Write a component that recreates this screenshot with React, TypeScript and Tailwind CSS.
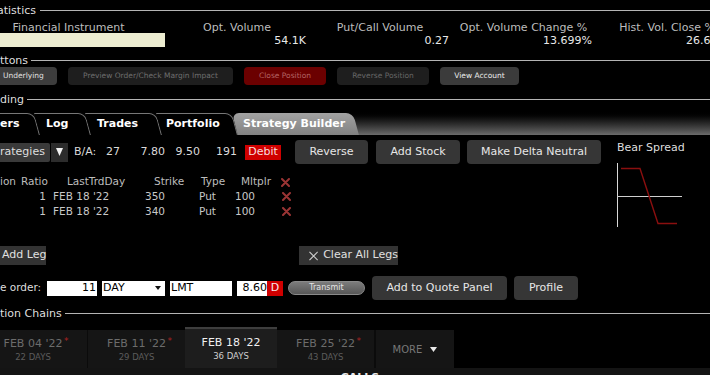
import React from "react";

function SectionTitle({ label, textClass, lineClass, className }: { label: string; textClass: string; lineClass: string; className: string }) {
  return (
    <div className={`flex items-center ${className}`}>
      <span className={`whitespace-nowrap text-[11px] leading-none text-[#dedede] ${textClass}`}>{label}</span>
      <div className={`h-px flex-1 bg-[#b4b4b4] ${lineClass}`} />
    </div>
  );
}

function RedX() {
  return (
    <svg width="9" height="9" viewBox="0 0 9 9" className="block">
      <path d="M1 1L8 8M8 1L1 8" stroke="#9a3434" strokeWidth="2" strokeLinecap="round" />
    </svg>
  );
}

function DateTab({ date, days, star, active, className }: { date: string; days: string; star?: boolean; active?: boolean; className: string }) {
  return (
    <div
      className={`flex shrink-0 flex-col items-center justify-center ${
        active ? "self-stretch border-t-2 border-[#3e3e3e] bg-[#1d1d1d]" : "mt-[3px] bg-[#151515]"
      } ${className}`}
    >
      <div className={`relative text-[11px] leading-[13px] ${active ? "text-[#f0f0f0]" : "text-[#6c6c6c]"}`}>
        {date}
        {star && <span className="absolute -right-[6px] -top-[2px] text-[9px] text-[#a22]">*</span>}
      </div>
      <div className={`mt-[2px] text-[8.5px] leading-[10px] ${active ? "text-[#cfcfcf]" : "text-[#5c5c5c]"}`}>{days}</div>
    </div>
  );
}

export default function App() {
  return (
    <div className="relative h-[375px] w-[710px] overflow-hidden bg-black font-['DejaVu_Sans',sans-serif] text-[#d8d8d8]">
      {/* Statistics */}
      <SectionTitle label="atistics" textClass="-ml-[3px]" lineClass="ml-[4px]" className="h-[21px]" />
      <div className="flex h-[12px] items-center whitespace-nowrap text-[11px] leading-none text-[#bdbdbd]">
        <div className="w-[165px] shrink-0 pr-[28px] text-center">Financial Instrument</div>
        <div className="w-[144px] shrink-0 text-center">Opt. Volume</div>
        <div className="w-[142px] shrink-0 text-center">Put/Call Volume</div>
        <div className="w-[145px] shrink-0 text-center">Opt. Volume Change %</div>
        <div className="w-[142px] shrink-0 text-center">Hist. Vol. Close %</div>
      </div>
      <div className="flex h-[14px] items-center whitespace-nowrap text-[11px] leading-none text-[#e8e8e8]">
        <div className="h-[14px] w-[165px] shrink-0 bg-[#ededd1]" />
        <div className="w-[144px] shrink-0 pr-[3px] text-right">54.1K</div>
        <div className="w-[142px] shrink-0 pr-[2px] text-right">0.27</div>
        <div className="w-[145px] shrink-0 pr-[4px] text-right">13.699%</div>
        <div className="w-[142px] shrink-0 pr-[10px] text-right">26.63%</div>
      </div>

      {/* Buttons */}
      <SectionTitle label="ttons" textClass="" lineClass="ml-[3px]" className="mt-[6px] h-[14px]" />
      <div className="flex h-[18px] whitespace-nowrap text-[7.5px]">
        <div className="flex w-[57px] shrink-0 items-center rounded-r-[4px] bg-[#3d3d3d] pl-[3px] text-[#e0e0e0]">Underlying</div>
        <div className="ml-[11px] flex w-[165px] shrink-0 items-center justify-center rounded-[4px] bg-[#1e1e1e] text-[#6e6e6e]">
          Preview Order/Check Margin Impact
        </div>
        <div className="ml-[11px] flex w-[82px] shrink-0 items-center justify-center rounded-[4px] bg-[#6b0000] text-[#b36464]">
          Close Position
        </div>
        <div className="ml-[11px] flex w-[92px] shrink-0 items-center justify-center rounded-[4px] bg-[#1e1e1e] text-[#666]">
          Reverse Position
        </div>
        <div className="ml-[11px] flex w-[79px] shrink-0 items-center justify-center rounded-[4px] bg-[#3b3b3b] text-[#ececec]">
          View Account
        </div>
      </div>

      {/* Trading */}
      <SectionTitle label="ding" textClass="" lineClass="ml-[3px]" className="mt-[7px] h-[14px]" />
      <div className="flex h-[29px] items-end overflow-hidden bg-linear-to-b from-black from-[15%] to-[#6c6c6c]">
        <div className="relative z-50 -ml-[8px] flex h-[22px] w-[42px] shrink-0 items-center">
          <div className="absolute inset-0 origin-top skew-x-[15deg] rounded-tr-[7px] border-r border-t border-[#777] bg-black" />
          <span className="relative pl-[8px] text-[11px] font-bold text-white">ers</span>
        </div>
        <div className="relative z-40 flex h-[22px] w-[51px] shrink-0 items-center">
          <div className="absolute inset-0 origin-top skew-x-[15deg] rounded-tr-[7px] border-r border-t border-[#777] bg-black" />
          <span className="relative pl-[12px] text-[11px] font-bold text-white">Log</span>
        </div>
        <div className="relative z-30 flex h-[22px] w-[71px] shrink-0 items-center">
          <div className="absolute inset-0 origin-top skew-x-[15deg] rounded-tr-[7px] border-r border-t border-[#777] bg-black" />
          <span className="relative pl-[12px] text-[11px] font-bold text-white">Trades</span>
        </div>
        <div className="relative z-20 flex h-[22px] w-[76px] shrink-0 items-center">
          <div className="absolute inset-0 origin-top skew-x-[15deg] rounded-tr-[7px] border-r border-t border-[#777] bg-black" />
          <span className="relative pl-[10px] text-[11px] font-bold text-white">Portfolio</span>
        </div>
        <div className="relative z-[60] flex h-[22px] w-[121px] shrink-0 items-center">
          <div className="absolute inset-0 origin-top skew-x-[15deg] rounded-t-[7px] bg-linear-to-b from-[#a2a2a2] to-[#828282]" />
          <span className="relative pl-[11px] text-[11px] font-bold text-white">Strategy Builder</span>
        </div>
      </div>

      {/* Strategy builder content */}
      <div className="flex">
        <div className="w-[605px] shrink-0">
          {/* toolbar */}
          <div className="mt-[5px] flex h-[24px] items-center whitespace-nowrap text-[11px]">
            <div className="flex h-[19px] w-[50px] shrink-0 items-center rounded-r-[2px] bg-[#3a3a3a] text-[#dedede]">rategies</div>
            <div className="ml-px flex h-[19px] w-[17px] shrink-0 items-center justify-center bg-[#2c2c2c]">
              <svg width="7" height="8" viewBox="0 0 7 8">
                <polygon points="0,0 7,0 3.5,8" fill="#f2f2f2" />
              </svg>
            </div>
            <div className="ml-[6px] w-[26px] shrink-0 text-[#dadada]">B/A:</div>
            <div className="w-[20px] shrink-0 text-right text-[#dadada]">27</div>
            <div className="w-[45px] shrink-0 text-right text-[#dadada]">7.80</div>
            <div className="w-[35px] shrink-0 text-right text-[#dadada]">9.50</div>
            <div className="w-[37px] shrink-0 text-right text-[#dadada]">191</div>
            <div className="ml-[8px] flex h-[15px] w-[36px] shrink-0 items-center justify-center bg-[#d00000] text-[#f6dede]">Debit</div>
            <div className="ml-[14px] flex h-[24px] w-[73px] shrink-0 items-center justify-center rounded-[4px] bg-[#363636] text-[#e6e6e6]">
              Reverse
            </div>
            <div className="ml-[8px] flex h-[24px] w-[84px] shrink-0 items-center justify-center rounded-[4px] bg-[#363636] text-[#e6e6e6]">
              Add Stock
            </div>
            <div className="ml-[7px] flex h-[24px] w-[134px] shrink-0 items-center justify-center rounded-[4px] bg-[#363636] text-[#e6e6e6]">
              Make Delta Neutral
            </div>
          </div>

          {/* table */}
          <div className="mt-[11px] whitespace-nowrap text-[10.5px] text-[#c8c8c8]">
            <div className="flex h-[14px] items-center text-[#bdbdbd]">
              <div className="w-[21px] shrink-0">ion</div>
              <div className="w-[46px] shrink-0">Ratio</div>
              <div className="w-[87px] shrink-0">LastTrdDay</div>
              <div className="w-[47px] shrink-0">Strike</div>
              <div className="w-[40px] shrink-0">Type</div>
              <div className="w-[40px] shrink-0">Mltplr</div>
              <RedX />
            </div>
            {["350", "340"].map((k) => (
              <div key={k} className="flex h-[15px] items-center">
                <div className="w-[46px] shrink-0 text-right">1</div>
                <div className="w-[99px] shrink-0 pl-[7px]">FEB 18 '22</div>
                <div className="w-[54px] shrink-0">{k}</div>
                <div className="w-[36px] shrink-0">Put</div>
                <div className="w-[47px] shrink-0">100</div>
                <RedX />
              </div>
            ))}
          </div>

          {/* add leg / clear */}
          <div className="mt-[27px] flex h-[19px] whitespace-nowrap text-[11px]">
            <div className="flex w-[46px] shrink-0 items-center bg-[#333] pl-[2px] text-[#e0e0e0]">Add Leg</div>
            <div className="ml-[253px] flex w-[99px] shrink-0 items-center bg-[#333] pl-[10px] text-[#e0e0e0]">
              <svg width="10" height="10" viewBox="0 0 10 10" className="mr-[5px]">
                <path d="M0.5 0.5L9.5 9.5M9.5 0.5L0.5 9.5" stroke="#cfcfcf" strokeWidth="1.2" />
              </svg>
              Clear All Legs
            </div>
          </div>

          {/* order row */}
          <div className="mt-[11px] flex h-[24px] items-center whitespace-nowrap text-[11px]">
            <div className="w-[47px] shrink-0 text-[10.5px] text-[#dedede]">e order:</div>
            <div className="flex h-[15px] w-[50px] shrink-0 items-center justify-end bg-white pr-px text-black">11</div>
            <div className="ml-[5px] flex h-[15px] w-[63px] shrink-0 items-center justify-between bg-white pl-px pr-[4px] text-black">
              DAY
              <svg width="6" height="4" viewBox="0 0 6 4">
                <polygon points="0,0 6,0 3,4" fill="#111" />
              </svg>
            </div>
            <div className="ml-[5px] flex h-[15px] w-[62px] shrink-0 items-center bg-white pl-px text-black">LMT</div>
            <div className="ml-[5px] flex h-[15px] w-[30px] shrink-0 items-center justify-end bg-white text-black">8.60</div>
            <div className="flex h-[15px] w-[16px] shrink-0 items-center justify-center bg-[#d00000] text-[#f6eaea]">D</div>
            <div className="ml-[5px] flex h-[14px] w-[77px] shrink-0 items-center justify-center rounded-full border border-[#8a8a8a] bg-linear-to-b from-[#7c7c7c] to-[#575757] text-[8px] text-[#e4e4e4]">
              Transmit
            </div>
            <div className="ml-[7px] flex h-[24px] w-[135px] shrink-0 items-center justify-center rounded-[4px] bg-[#363636] text-[#e6e6e6]">
              Add to Quote Panel
            </div>
            <div className="ml-[7px] flex h-[24px] w-[64px] shrink-0 items-center justify-center rounded-[4px] bg-[#363636] text-[#e6e6e6]">
              Profile
            </div>
          </div>
        </div>

        {/* right panel */}
        <div className="flex flex-1 flex-col pl-[12px] pt-[6px]">
          <div className="whitespace-nowrap text-[11px] leading-[13px] text-[#dedede]">Bear Spread</div>
          <svg width="70" height="70" viewBox="0 0 70 70" className="mt-[6px] block">
            <line x1="0.5" y1="3" x2="0.5" y2="67" stroke="#d8d8d8" strokeWidth="1" />
            <line x1="0" y1="36.5" x2="65" y2="36.5" stroke="#cfcfcf" strokeWidth="1" />
            <polyline points="4,8.5 23,8.5 41,63.5 60,63.5" fill="none" stroke="#8a0f0f" strokeWidth="1.4" />
          </svg>
        </div>
      </div>

      {/* Option Chains */}
      <SectionTitle label="tion Chains" textClass="" lineClass="ml-[3px]" className="mt-[6px] h-[14px]" />
      <div className="mt-[7px] flex h-[41px] w-[455px]">
        <DateTab date="FEB 04 '22" days="22 DAYS" star className="w-[87px] pr-[21px]" />
        <div className="mt-[3px] w-px shrink-0 bg-[#0b0b0b]" />
        <DateTab date="FEB 11 '22" days="29 DAYS" star className="w-[97px]" />
        <DateTab date="FEB 18 '22" days="36 DAYS" active className="w-[92px]" />
        <DateTab date="FEB 25 '22" days="43 DAYS" star className="w-[97px]" />
        <div className="mt-[3px] w-[2px] shrink-0 bg-[#0b0b0b]" />
        <div className="mt-[3px] flex w-[78px] shrink-0 items-center justify-center bg-[#151515] text-[10px] text-[#777]">
          MORE
          <svg width="7" height="5" viewBox="0 0 7 5" className="ml-[8px]">
            <polygon points="0,0 7,0 3.5,5" fill="#e8e8e8" />
          </svg>
        </div>
      </div>
      <div className="flex h-[20px] justify-center bg-[#141414] pl-[10px] pt-[4px] text-[11px] font-bold leading-none text-[#e8e8e8]">
        CALLS
      </div>
    </div>
  );
}
